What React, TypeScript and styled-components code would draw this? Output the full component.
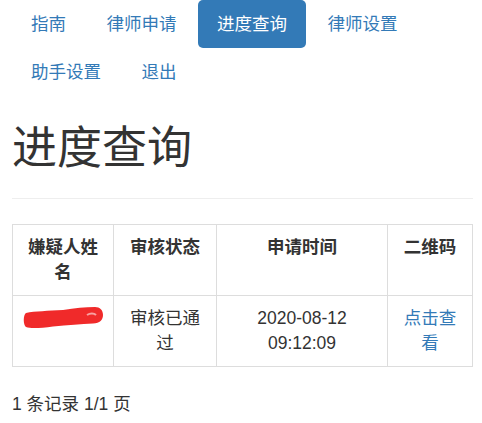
import styled, {createGlobalStyle} from "styled-components";

const GlobalStyle = createGlobalStyle`
 html, body {
  margin: 0;
  padding: 0;
  background: #fff;
 }
 body {
  font-family: "Liberation Sans", "Noto Sans CJK SC", sans-serif;
  font-size: 17.5px;
  line-height: 25px;
  color: #333;
 }
`;

const navItems = ["指南", "律师申请", "进度查询", "律师设置", "助手设置", "退出"];

const App = () => {
 return (
  <>
   <GlobalStyle />
   <Page>
    <Nav>
     {navItems.map(item => (
      <Pill key={item} active={item === "进度查询"}>{item}</Pill>
     ))}
    </Nav>
    <PageHeader>
     <Title>进度查询</Title>
    </PageHeader>
    <Table>
     <colgroup>
      <col style={{width: 101}} />
      <col style={{width: 103}} />
      <col style={{width: 171}} />
      <col />
     </colgroup>
     <thead>
      <tr>
       <Th>嫌疑人姓名</Th>
       <Th>审核状态</Th>
       <Th>申请时间</Th>
       <Th>二维码</Th>
      </tr>
     </thead>
     <tbody>
      <tr>
       <Td>
        <Redacted>
         <svg width="80" height="22" viewBox="0 0 80 22">
          <path
           d="M3 6 C12 4, 25 4, 40 3 C52 1, 62 0, 72 0 C77 0, 80 3, 80 8 C80 13, 77 16, 70 16.5 C58 17, 45 18, 30 19.5 C18 21, 8 22, 3 20 C0 18, 0 8, 3 6 Z"
           fill="#f02a2a"
          />
          <path d="M64 8 C67 6, 71 6, 73 8" stroke="#f8a0a0" strokeWidth="2" fill="none" />
         </svg>
        </Redacted>
       </Td>
       <Td>审核已通过</Td>
       <Td>2020-08-12 09:12:09</Td>
       <Td><Link href="#">点击查看</Link></Td>
      </tr>
     </tbody>
    </Table>
    <Footer>1 条记录 1/1 页</Footer>
   </Page>
  </>
 );
};

export default App;

const Page = styled.div`
 padding: 0 9px 0 12px;
`;

const Nav = styled.ul`
 display: flex;
 flex-wrap: wrap;
 gap: 0 2.5px;
 list-style: none;
 margin: 0;
 padding: 0;
`;

const Pill = styled.li<{active: boolean}>`
 padding: 12px 19px;
 line-height: 24px;
 border-radius: 5px;
 color: ${({active}) => (active ? "#fff" : "#337ab7")};
 background-color: ${({active}) => (active ? "#337ab7" : "transparent")};
 cursor: pointer;
`;

const PageHeader = styled.div`
 margin: 28px 0 25px;
 padding-bottom: 12px;
 border-bottom: 1px solid #eee;
`;

const Title = styled.h1`
 margin: 0 0 12px;
 font-size: 45px;
 line-height: 50px;
 font-weight: 400;
 color: #333;
`;

const Table = styled.table`
 width: 100%;
 border-collapse: collapse;
 table-layout: fixed;
 margin-bottom: 25px;
`;

const Th = styled.th`
 border: 1px solid #ddd;
 padding: 10px;
 text-align: center;
 vertical-align: top;
 font-weight: bold;
`;

const Td = styled.td`
 border: 1px solid #ddd;
 padding: 10px;
 text-align: center;
 vertical-align: top;
`;

const Redacted = styled.div`
 display: flex;
 justify-content: flex-start;
 height: 25px;
 margin-top: 1px;
`;

const Link = styled.a`
 color: #337ab7;
 text-decoration: none;
`;

const Footer = styled.p`
 margin: 0;
`;
